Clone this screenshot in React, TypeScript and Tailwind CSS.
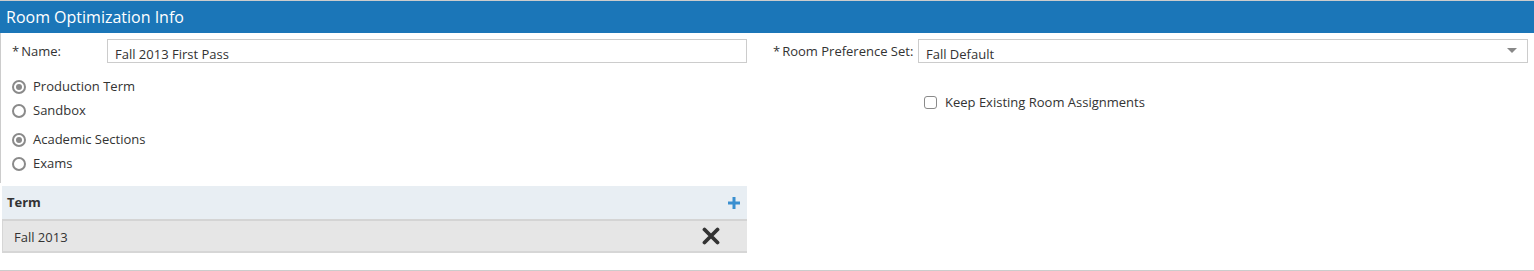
import React from "react";

const font = { fontFamily: '"Open Sans", "Liberation Sans", sans-serif' };

// radio circle as drawn by the original form
const Radio = ({ checked, label }: { checked?: boolean; label: string }) => (
  <label className="flex items-center h-[24px] text-[13px] text-[#333]">
    <span className="ml-[11px] w-[14px] h-[14px] rounded-full border-2 border-[#8a8a8a] flex items-center justify-center">
      {checked && <span className="w-[6px] h-[6px] rounded-full bg-[#8a8a8a]" />}
    </span>
    <span className="ml-[7px]">{label}</span>
  </label>
);

export default function App() {
  return (
    <div
      className="w-[1534px] h-[271px] bg-white border-t border-b border-[#cccccc] flex flex-col"
      style={font}
    >
      {/* Panel header */}
      <div className="h-[32px] bg-[#1b76b8] text-white text-[16px] leading-[32px] pl-[6px]">
        Room Optimization Info
      </div>

      <div className="flex flex-1">
        {/* Left column */}
        <div className="w-[747px] flex flex-col">
          <div className="border-l border-[#cccccc] pb-[7px]">
            <div className="flex items-start pt-[6px]">
              <div className="w-[106px] pl-[11px] pt-[3px] text-[13px] text-[#333]">
                <span className="mr-[2px]">*</span>Name:
              </div>
              <div className="w-[640px] h-[24px] border border-[#cccccc] flex items-start pl-[7px] pt-[5px] text-[13px] text-[#333]">
                Fall 2013 First Pass
              </div>
            </div>

            <div className="flex flex-col mt-[12px]">
              <Radio checked label="Production Term" />
              <Radio label="Sandbox" />
            </div>
            <div className="flex flex-col mt-[5px]">
              <Radio checked label="Academic Sections" />
              <Radio label="Exams" />
            </div>
          </div>

          {/* Term table */}
          <div className="ml-[2px] w-[745px] mt-[3px]">
            <div className="h-[35px] bg-[#e8eef3] border-b-2 border-[#d4d4d4] flex items-center justify-between pl-[5px] pr-[6px]">
              <span className="text-[13px] font-bold text-[#333]">Term</span>
              <svg width="14" height="14" viewBox="0 0 14 14">
                <path d="M7 1v12M1 7h12" stroke="#3a8fd0" strokeWidth="3" />
              </svg>
            </div>
            <div className="h-[32px] bg-[#e6e6e6] border-l border-b-2 border-[#d6d6d6] flex items-center justify-between pl-[11px] pr-[27px] pt-[4px]">
              <span className="text-[13px] text-[#333]">Fall 2013</span>
              <svg width="18" height="18" viewBox="0 0 18 18" className="-mt-[4px]">
                <path d="M2.5 2.5l13 13M15.5 2.5l-13 13" stroke="#333" strokeWidth="3.8" strokeLinecap="round" />
              </svg>
            </div>
          </div>
        </div>

        {/* Right column */}
        <div className="flex-1 flex flex-col pl-[26px]">
          <div className="flex items-start pt-[6px]">
            <div className="w-[145px] pt-[3px] text-[13px] text-[#333]">
              <span className="mr-[2px]">*</span>Room Preference Set:
            </div>
            <div className="w-[610px] h-[24px] border border-[#cccccc] flex items-center justify-between pl-[7px] pr-[10px] text-[13px] text-[#333]">
              <span className="mt-[7px]">Fall Default</span>
              <svg width="10" height="6" viewBox="0 0 10 6">
                <path d="M0 0h10L5 5z" fill="#888" />
              </svg>
            </div>
          </div>
          <label className="flex items-center mt-[30px] ml-[151px] text-[13px] text-[#333]">
            <span className="w-[13px] h-[13px] border border-[#8a8a8a] rounded-[3px] bg-white" />
            <span className="ml-[8px]">Keep Existing Room Assignments</span>
          </label>
        </div>
      </div>
    </div>
  );
}
